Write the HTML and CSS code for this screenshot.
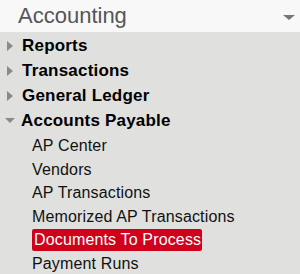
FILE: index.html
```html
<!DOCTYPE html>
<html lang="en">
<head>
    <meta charset="UTF-8">
    <title>Accounting</title>
    <link rel="stylesheet" href="styles.css">
</head>
<body>
    <div class="menu">
        <div class="menu-head">
            <span class="menu-title">Accounting</span>
            <span class="caret"></span>
        </div>
        <ul class="groups">
            <li class="group"><span class="arrow"></span>Reports</li>
            <li class="group"><span class="arrow"></span>Transactions</li>
            <li class="group"><span class="arrow"></span>General Ledger</li>
            <li class="group open"><span class="arrow"></span>Accounts Payable</li>
        </ul>
        <ul class="items">
            <li class="item">AP Center</li>
            <li class="item">Vendors</li>
            <li class="item">AP Transactions</li>
            <li class="item">Memorized AP Transactions</li>
            <li class="item"><span class="active">Documents To Process</span></li>
            <li class="item">Payment Runs</li>
        </ul>
    </div>
</body>
</html>
```

FILE: styles.css
```css
*{
    box-sizing: border-box;
}
body{
    margin: 0;
    background-color: #e0e1df;
    font-family: Arial, "Liberation Sans", sans-serif;
    color: #111;
}
ul{
    list-style: none;
    margin: 0;
    padding: 0;
}
.menu-head{
    height: 32px;
    background-color: #f8f8f8;
    display: flex;
    align-items: center;
    justify-content: space-between;
    padding: 0 5px 0 18px;
}
.menu-title{
    font-size: 22px;
    color: #555;
}
.caret{
    width: 0;
    height: 0;
    border-left: 6px solid transparent;
    border-right: 6px solid transparent;
    border-top: 5px solid #777;
    margin-top: 2px;
}
.groups{
    padding-top: 1px;
}
.group{
    height: 25px;
    display: flex;
    align-items: center;
    font-size: 17px;
    font-weight: bold;
    letter-spacing: 0.2px;
    color: #000;
}
.arrow{
    width: 0;
    height: 0;
    border-top: 5px solid transparent;
    border-bottom: 5px solid transparent;
    border-left: 6px solid #8a8a8a;
    margin: 0 9px 0 7px;
}
.open .arrow{
    border-left: 5.5px solid transparent;
    border-right: 5.5px solid transparent;
    border-top: 5px solid #8a8a8a;
    border-bottom: 0;
    margin: 0 6px 0 5px;
}
.items{
    padding: 1.5px 0 0 32px;
}
.item{
    height: 23.5px;
    display: flex;
    align-items: center;
    font-size: 16px;
    letter-spacing: 0.15px;
    color: #111;
}
.active{
    background-color: #d0021b;
    color: #fff;
    border-radius: 2px;
    padding: 2px 1px 2px 2px;
}
```
